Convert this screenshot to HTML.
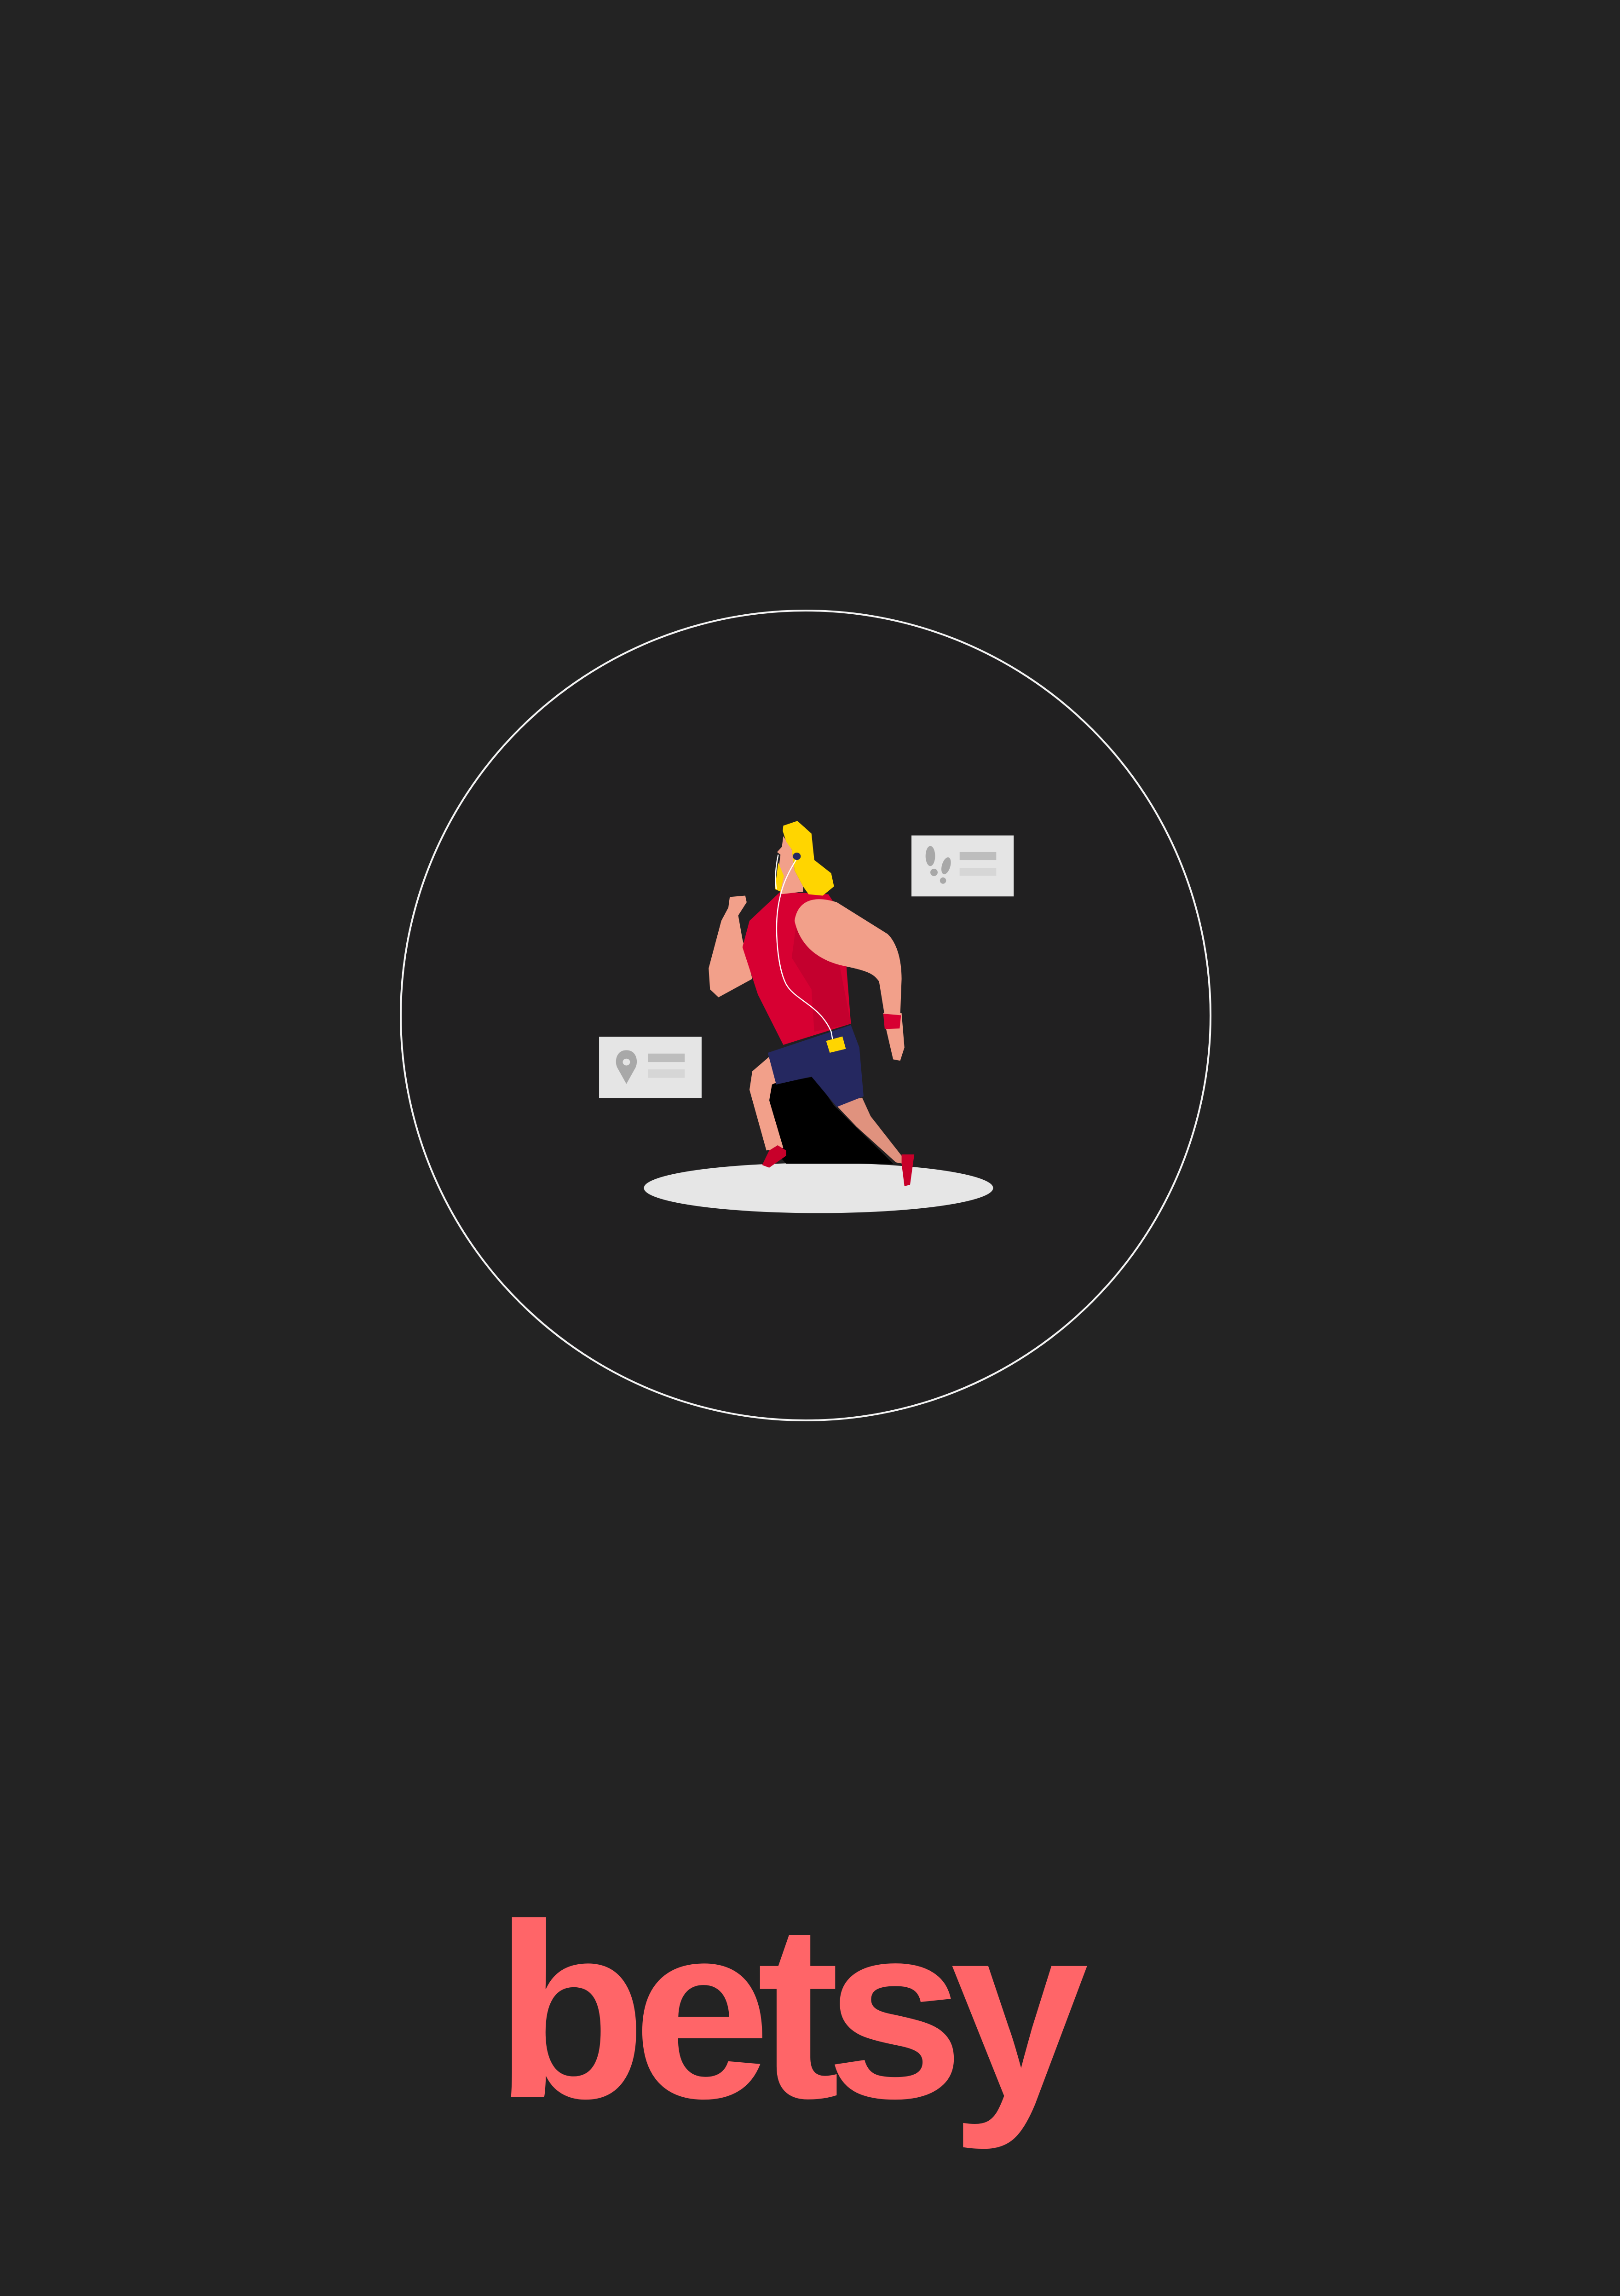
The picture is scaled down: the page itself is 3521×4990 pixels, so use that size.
<!DOCTYPE html>
<html><head><meta charset="utf-8"><style>
html,body{margin:0;padding:0;background:#232323;}
body{width:3521px;height:4990px;position:relative;overflow:hidden;}
.circ{position:absolute;left:869px;top:1325px;width:1764px;height:1764px;border-radius:50%;border:4px solid #f4f4f4;box-sizing:border-box;background:#212021;}
.logo{position:absolute;left:1075px;top:4102px;font-family:"Liberation Sans",sans-serif;font-weight:bold;font-size:540px;color:#ff6568;letter-spacing:-30px;line-height:1;white-space:nowrap;}
svg{position:absolute;}
</style></head><body>
<div class="circ"></div>
<svg style="left:1280px;top:1760px" width="960" height="900" viewBox="0 0 1568 1568" preserveAspectRatio="none">
<ellipse cx="815" cy="1432" rx="620" ry="95" fill="#e6e6e6"/>
<rect x="1145" y="97" width="363" height="231" fill="#e5e5e5"/>
<rect x="1316" y="160" width="130" height="30" fill="#bdbdbd"/>
<rect x="1316" y="220" width="130" height="30" fill="#d6d6d6"/>
<ellipse cx="1212" cy="175" rx="17" ry="38" fill="#a8a8a8"/>
<ellipse cx="1225" cy="237" rx="13" ry="14" fill="#a8a8a8"/>
<ellipse cx="1268" cy="212" rx="15" ry="33" fill="#a8a8a8" transform="rotate(15 1268 212)"/>
<ellipse cx="1257" cy="268" rx="11" ry="12" fill="#a8a8a8"/>
<rect x="36" y="859" width="364" height="232" fill="#e5e5e5"/>
<rect x="210" y="923" width="130" height="32" fill="#bdbdbd"/>
<rect x="210" y="983" width="130" height="32" fill="#d6d6d6"/>
<path d="M133 910 C98 910 90 950 100 975 L133 1038 L166 975 C176 950 168 910 133 910 Z" fill="#a8a8a8"/>
<circle cx="133" cy="955" r="13" fill="#e5e5e5"/>
<polygon points="640,1040 800,1010 870,1120 1080,1340 700,1340 650,1280" fill="#000"/>
<polygon points="640,935 580,990 570,1060 630,1290 690,1280 640,1100 650,1040 670,1030" fill="#f2a08a"/>
<polygon points="670,1270 700,1290 700,1310 640,1355 615,1345 640,1290" fill="#c8002a"/>
<polygon points="870,1110 970,1090 1000,1160 1110,1310 1115,1340 1090,1335 950,1200" fill="#e0927e"/>
<polygon points="1110,1305 1155,1305 1140,1420 1120,1425 1110,1340" fill="#c8002a"/>
<polygon points="635,920 930,815 960,900 975,1085 880,1125 790,1010 665,1040" fill="#252860"/>
<path d="M500 330 L555 325 L560 350 L530 400 L545 490 L580 640 L460 710 L430 680 L425 600 L470 420 L495 370 Z" fill="#f2a08a"/>
<path d="M680 310 L850 320 L900 400 L930 810 L690 890 L600 700 L545 520 L570 420 Z" fill="#d70032"/>
<path d="M740 400 L890 590 L930 810 L800 840 L790 680 L720 560 Z" fill="#c4002e"/>
<path d="M730 420 C740 350 790 320 880 350 L1060 470 C1090 500 1110 560 1110 640 L1105 780 L1050 780 L1030 650 C1010 620 990 610 900 590 C820 570 750 520 730 420 Z" fill="#f2a08a"/>
<path d="M1045 770 L1110 770 L1120 900 L1105 950 L1080 945 L1055 830 Z" fill="#f2a08a"/>
<polygon points="1045,772 1108,778 1103,828 1050,830" fill="#d70032"/>
<path d="M690 100 L720 150 L730 230 L760 290 L760 310 L680 320 L670 250 L680 170 L668 160 L685 140 Z" fill="#f2a08a"/>
<path d="M690 60 L740 42 L790 90 L800 190 L860 240 L870 290 L830 325 L780 320 L760 290 L730 230 L720 150 L700 120 L688 80 Z" fill="#ffd500"/>
<path d="M672 200 L660 300 L680 310 L692 250 Z" fill="#ffd500"/>
<circle cx="738" cy="176" r="14" fill="#252860"/>
<path d="M735 190 C700 250 680 300 670 380 S670 600 700 660 S820 740 860 840 L865 870" stroke="#fff" stroke-width="4" fill="none"/>
<path d="M672 170 C662 220 660 260 665 300" stroke="#fff" stroke-width="4" fill="none"/>
<polygon points="842,875 900,858 912,905 855,920" fill="#ffd500"/>
</svg>
<div class="logo">betsy</div>
</body></html>
